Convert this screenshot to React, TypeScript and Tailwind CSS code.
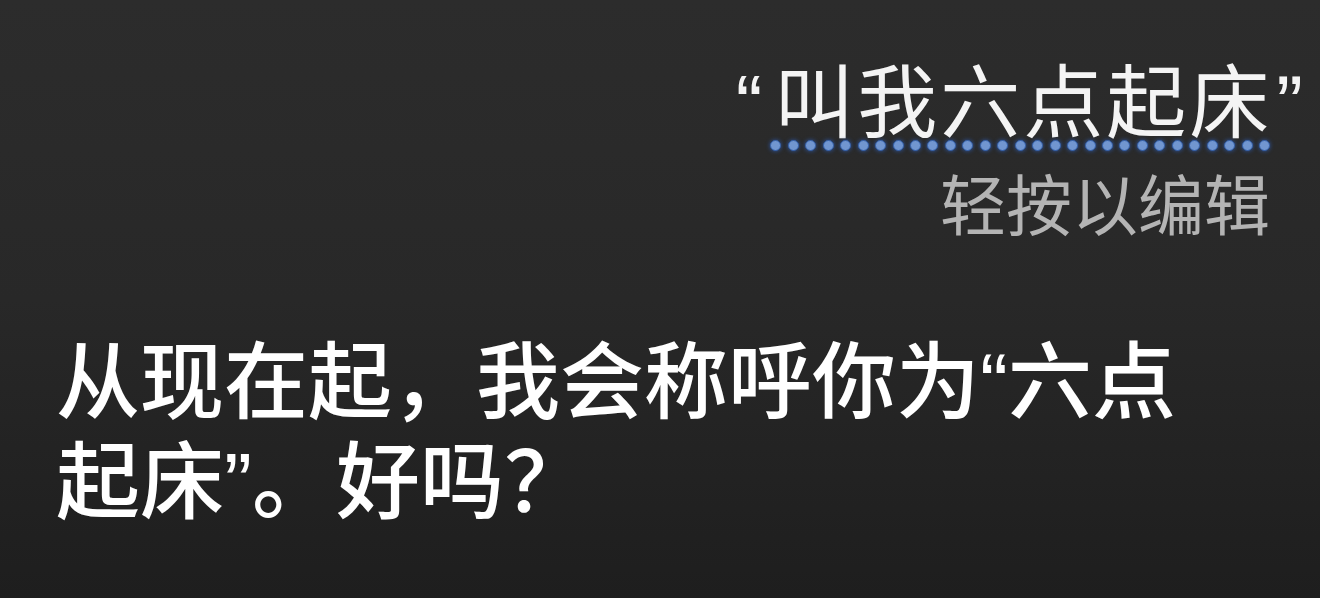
const font = { fontFamily: '"Liberation Sans", "Noto Sans CJK SC", sans-serif' };

const dots = Array.from({ length: 29 });

function Prompt() {
  return (
    <div className="flex flex-col items-end">
      <div className="flex items-baseline pr-[14px] text-[80px] leading-none tracking-[3px] text-[#f4f4f4]">
        <span className="mr-[9px]">“</span>
        <span className="flex flex-col">
          <span>叫我六点起床</span>
          <span className="ml-[-4px] mt-[-4px] flex h-[11px] justify-between pr-[2px]">
            {dots.map((_, i) => (
              <span
                key={i}
                className="h-[11px] w-[11px] rounded-full border border-[#3560a8] bg-[#7196d0] shadow-[0_0_4px_#2d58a8]"
              />
            ))}
          </span>
        </span>
        <span className="ml-[4px]">”</span>
      </div>
      <div className="mt-[23px] pr-[50px] text-[66px] leading-none text-[#b4b4b4]">
        轻按以编辑
      </div>
    </div>
  );
}

export default function App() {
  return (
    <div
      className="flex h-[598px] w-[1320px] flex-col overflow-hidden bg-gradient-to-b from-[#2c2c2c] via-[#282828] to-[#1e1e1e]"
      style={font}
    >
      <div className="pt-[64px]">
        <Prompt />
      </div>
      <div className="mt-[93px] pl-[56px] text-[84px] font-medium leading-[100px] text-white">
        从现在起，我会称呼你为“六点
        <br />
        起床”。好吗？
      </div>
    </div>
  );
}
